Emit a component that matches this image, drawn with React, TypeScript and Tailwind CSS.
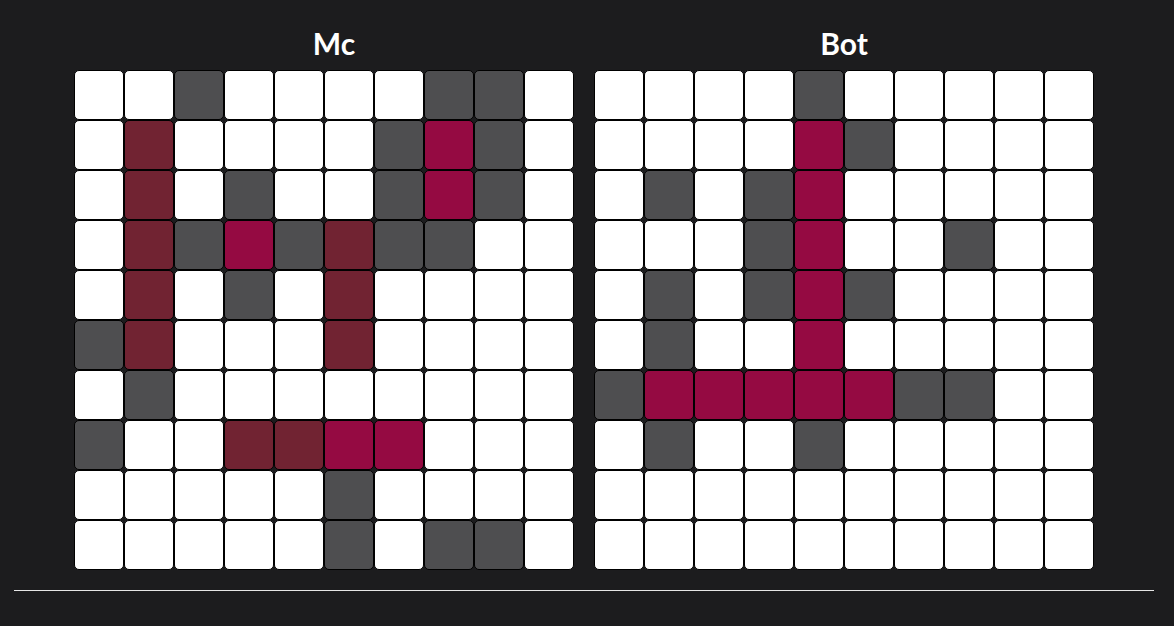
const W = 'W';
const G = 'G';
const C = 'C';
const D = 'D';

const mcBoard: string[][] = [
  [W, W, G, W, W, W, W, G, G, W],
  [W, D, W, W, W, W, G, C, G, W],
  [W, D, W, G, W, W, G, C, G, W],
  [W, D, G, C, G, D, G, G, W, W],
  [W, D, W, G, W, D, W, W, W, W],
  [G, D, W, W, W, D, W, W, W, W],
  [W, G, W, W, W, W, W, W, W, W],
  [G, W, W, D, D, C, C, W, W, W],
  [W, W, W, W, W, G, W, W, W, W],
  [W, W, W, W, W, G, W, G, G, W],
];

const botBoard: string[][] = [
  [W, W, W, W, G, W, W, W, W, W],
  [W, W, W, W, C, G, W, W, W, W],
  [W, G, W, G, C, W, W, W, W, W],
  [W, W, W, G, C, W, W, G, W, W],
  [W, G, W, G, C, G, W, W, W, W],
  [W, G, W, W, C, W, W, W, W, W],
  [G, C, C, C, C, C, G, G, W, W],
  [W, G, W, W, G, W, W, W, W, W],
  [W, W, W, W, W, W, W, W, W, W],
  [W, W, W, W, W, W, W, W, W, W],
];

const cellColor: Record<string, string> = {
  W: 'bg-white',
  G: 'bg-[#4e4e50]',
  C: 'bg-[#950a42]',
  D: 'bg-[#712332]',
};

function Board({ title, cells, className }: { title: string; cells: string[][]; className?: string }) {
  return (
    <div className={className}>
      <h2 className="text-center text-[30px] leading-[36px] font-bold text-white font-['Lato',sans-serif] mb-[9px]">
        {title}
      </h2>
      <div className="grid grid-cols-[repeat(10,50px)] grid-rows-[repeat(10,50px)] w-[500px]">
        {cells.flat().map((c, i) => (
          <div
            key={i}
            className={`w-[50px] h-[50px] border border-black rounded-[5px] ${cellColor[c]}`}
          />
        ))}
      </div>
    </div>
  );
}

export default function App() {
  return (
    <div className="min-h-screen bg-[#1c1c1e] pl-[14px] pr-[20px] pt-[25px]">
      <div className="flex justify-center">
        <Board title="Mc" cells={mcBoard} className="w-[520px]" />
        <Board title="Bot" cells={botBoard} className="w-[500px]" />
      </div>
      <div className="mt-[20px] h-px bg-[#e6e6e6]" />
    </div>
  );
}
